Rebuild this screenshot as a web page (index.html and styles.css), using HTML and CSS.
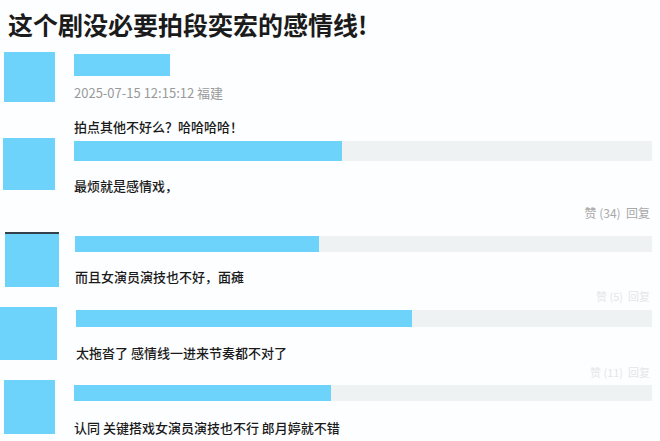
FILE: index.html
```html
<!DOCTYPE html>
<html lang="zh-CN">
<head>
    <meta charset="UTF-8">
    <title>评论截图</title>
    <link rel="stylesheet" href="styles.css">
</head>
<body>

<div class="title">这个剧没必要拍段奕宏的感情线!</div>

<!-- 第一条：带时间和地区 -->
<div class="shot shot-1">
    <div class="avatar"></div>
    <div class="body">
        <div class="name-box"></div>
        <div class="meta">2025-07-15 12:15:12 福建</div>
        <div class="text">拍点其他不好么？哈哈哈哈！</div>
    </div>
</div>

<div class="shot shot-2">
    <div class="avatar"></div>
    <div class="body">
        <div class="bar"><div class="fill" style="width: 268px"></div></div>
        <div class="text">最烦就是感情戏，</div>
        <div class="actions">赞 (34)&nbsp;&nbsp;回复</div>
    </div>
</div>

<div class="shot shot-3">
    <div class="avatar"></div>
    <div class="body">
        <div class="bar"><div class="fill" style="width: 244px"></div></div>
        <div class="text">而且女演员演技也不好，面瘫</div>
        <div class="actions faint">赞 (5)&nbsp;&nbsp;回复</div>
    </div>
</div>

<div class="shot shot-4">
    <div class="avatar"></div>
    <div class="body">
        <div class="bar"><div class="fill" style="width: 336px"></div></div>
        <div class="text">太拖沓了 感情线一进来节奏都不对了</div>
        <div class="actions faint">赞 (11)&nbsp;&nbsp;回复</div>
    </div>
</div>

<div class="shot shot-5">
    <div class="avatar"></div>
    <div class="body">
        <div class="bar"><div class="fill" style="width: 257px"></div></div>
        <div class="text">认同 关键搭戏女演员演技也不行 郎月婷就不错</div>
    </div>
</div>

</body>
</html>
```

FILE: styles.css
```css
body {
    margin: 0;
    background-color: #fdfeff;
    font-family: "Noto Sans CJK SC", "Noto Sans", sans-serif;
    color: #222;
    width: 660px;
    height: 441px;
    overflow: hidden;
}

.title {
    height: 48px;
    padding-left: 8px;
    font-size: 25px;
    font-weight: bold;
    line-height: 48px;
    color: #1b1b1b;
}

.shot {
    display: flex;
}

.avatar {
    flex: none;
    background-color: #6dd3fb;
}

.body {
    flex: 1;
    margin-right: 8px;
}

.name-box {
    width: 96px;
    height: 22px;
    background-color: #6dd3fb;
}

.meta {
    font-size: 13px;
    line-height: 18px;
    color: #9a9a9a;
}

.text {
    font-size: 13px;
    line-height: 18px;
    color: #1a1a1a;
    font-weight: 500;
}

.bar {
    background-color: #eef2f3;
}

.fill {
    height: 100%;
    background-color: #6dd3fb;
}

.actions {
    font-size: 12px;
    line-height: 18px;
    color: #a8a8a8;
    text-align: right;
    padding-right: 2px;
}

.faint {
    font-size: 11px;
    line-height: 14px;
    color: #e4e6e8;
}

/* 每一张截图的位置都不一样 */
.shot-1 { height: 87px; }
.shot-1 .avatar { margin: 4px 0 0 4px; width: 51px; height: 50px; }
.shot-1 .body { margin-left: 19px; }
.shot-1 .name-box { margin-top: 6px; }
.shot-1 .meta { margin-top: 8px; }
.shot-1 .text { margin-top: 16px; }

.shot-2 { height: 93px; }
.shot-2 .avatar { margin: 3px 0 0 3px; width: 52px; height: 52px; }
.shot-2 .body { margin-left: 19px; }
.shot-2 .bar { margin-top: 6px; height: 20px; }
.shot-2 .text { margin-top: 16px; }
.shot-2 .actions { margin-top: 9px; }

.shot-3 { height: 75px; }
.shot-3 .avatar { margin: 4px 0 0 5px; width: 54px; height: 55px; border-top: 2px solid #34404c; box-sizing: border-box; }
.shot-3 .body { margin-left: 16px; }
.shot-3 .bar { margin-top: 8px; height: 16px; }
.shot-3 .text { margin-top: 16px; }
.shot-3 .actions { margin-top: 3px; }

.shot-4 { height: 75px; }
.shot-4 .avatar { margin: 4px 0 0 0; width: 57px; height: 53px; }
.shot-4 .body { margin-left: 19px; }
.shot-4 .bar { margin-top: 7px; height: 17px; }
.shot-4 .text { margin-top: 17px; }
.shot-4 .actions { margin-top: 3px; }

.shot-5 { height: 63px; }
.shot-5 .avatar { margin: 2px 0 0 4px; width: 51px; height: 54px; }
.shot-5 .body { margin-left: 19px; }
.shot-5 .bar { margin-top: 7px; height: 16px; }
.shot-5 .text { margin-top: 18px; }
```
